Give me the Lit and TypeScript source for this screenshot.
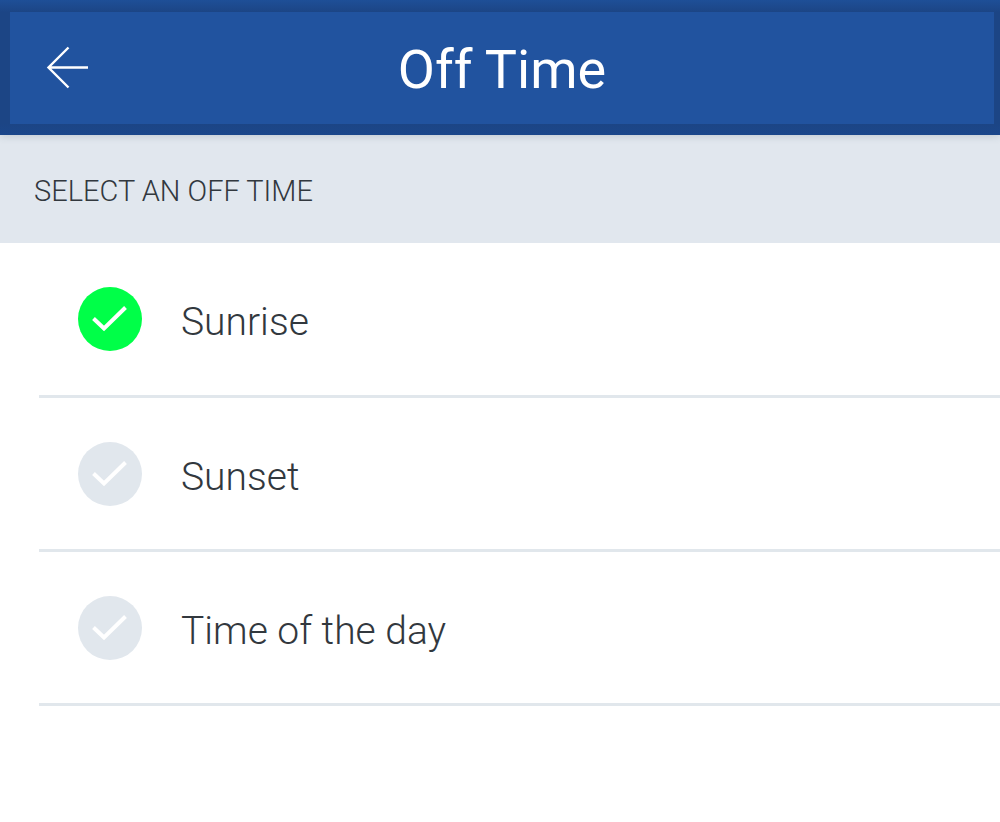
import { LitElement, html, css } from "lit";
import { customElement, state } from "lit/decorators.js";

const OPTIONS = ["Sunrise", "Sunset", "Time of the day"];

@customElement("app-root")
export class AppRoot extends LitElement {
  @state() private selected = "Sunrise";

  static styles = css`
    :host {
      display: block;
      min-height: 100vh;
      background: #fff;
      color: #32383e;
      font-family: Roboto, sans-serif;
      font-weight: 300;
    }
    * { box-sizing: border-box; }
    header {
      padding: 12px 6px 11px 10px;
      background: linear-gradient(#1e4f97, #1c4585 12px, #1c4585 124px, #1b478b);
      box-shadow: 0 1px 8px rgba(60, 80, 90, 0.2);
      position: relative;
    }
    .bar {
      display: grid;
      grid-template-columns: 80px 1fr 80px;
      align-items: center;
      padding: 24px 8px;
      background: #21539f;
      color: #fff;
    }
    .back {
      display: flex;
      padding: 0 0 0 28px;
      border: 0;
      background: none;
      color: inherit;
    }
    .back svg { flex: none; }
    h1 {
      margin: 0;
      padding-top: 4px;
      text-align: center;
      font-size: 54px;
      line-height: 60px;
      font-weight: 400;
    }
    fieldset { margin: 0; padding: 0; border: 0; min-width: 0; }
    legend {
      width: 100%;
      padding: 38px 34px 34px;
      background: #e1e7ee;
      font-size: 29px;
      line-height: 36px;
    }
    .list { padding-left: 39px; }
    .row {
      display: flex;
      align-items: center;
      gap: 39px;
      padding: 44px 39px;
      border-bottom: 3px solid #e1e7ec;
      font-size: 39px;
      line-height: 48px;
    }
    .row + .row { padding: 44px 39px 43px; }
    .name { padding-top: 6px; }
    .mark {
      display: grid;
      flex: none;
      width: 64px;
      height: 64px;
    }
    .mark > * { grid-area: 1 / 1; }
    input {
      appearance: none;
      width: 64px;
      height: 64px;
      margin: 0;
      border-radius: 50%;
      background: #e1e7ed;
    }
    input:checked { background: #00ff48; }
    .mark svg { pointer-events: none; z-index: 1; }
  `;

  render() {
    return html`
      <header>
        <div class="bar">
          <button class="back" aria-label="Back">
            <svg width="44" height="44" viewBox="0 0 44 44" fill="none" stroke="currentColor" stroke-width="2.4">
              <path d="M42 21.5H2.5M22.5 1.5L2.5 21.5L22.5 41.5" />
            </svg>
          </button>
          <h1>Off Time</h1>
        </div>
      </header>
      <fieldset>
        <legend>SELECT AN OFF TIME</legend>
        <div class="list">
          ${OPTIONS.map(
            (name) => html`
              <label class="row">
                <span class="mark">
                  <input type="radio" name="time" .checked=${this.selected === name}
                    @change=${() => (this.selected = name)} />
                  <svg width="64" height="64" viewBox="0 0 64 64" fill="none" stroke="#fff" stroke-width="4">
                    <path d="M15.500 31.500L26 41.500L47.500 20.500" />
                  </svg>
                </span>
                <span class="name">${name}</span>
              </label>
            `
          )}
        </div>
      </fieldset>
    `;
  }
}
